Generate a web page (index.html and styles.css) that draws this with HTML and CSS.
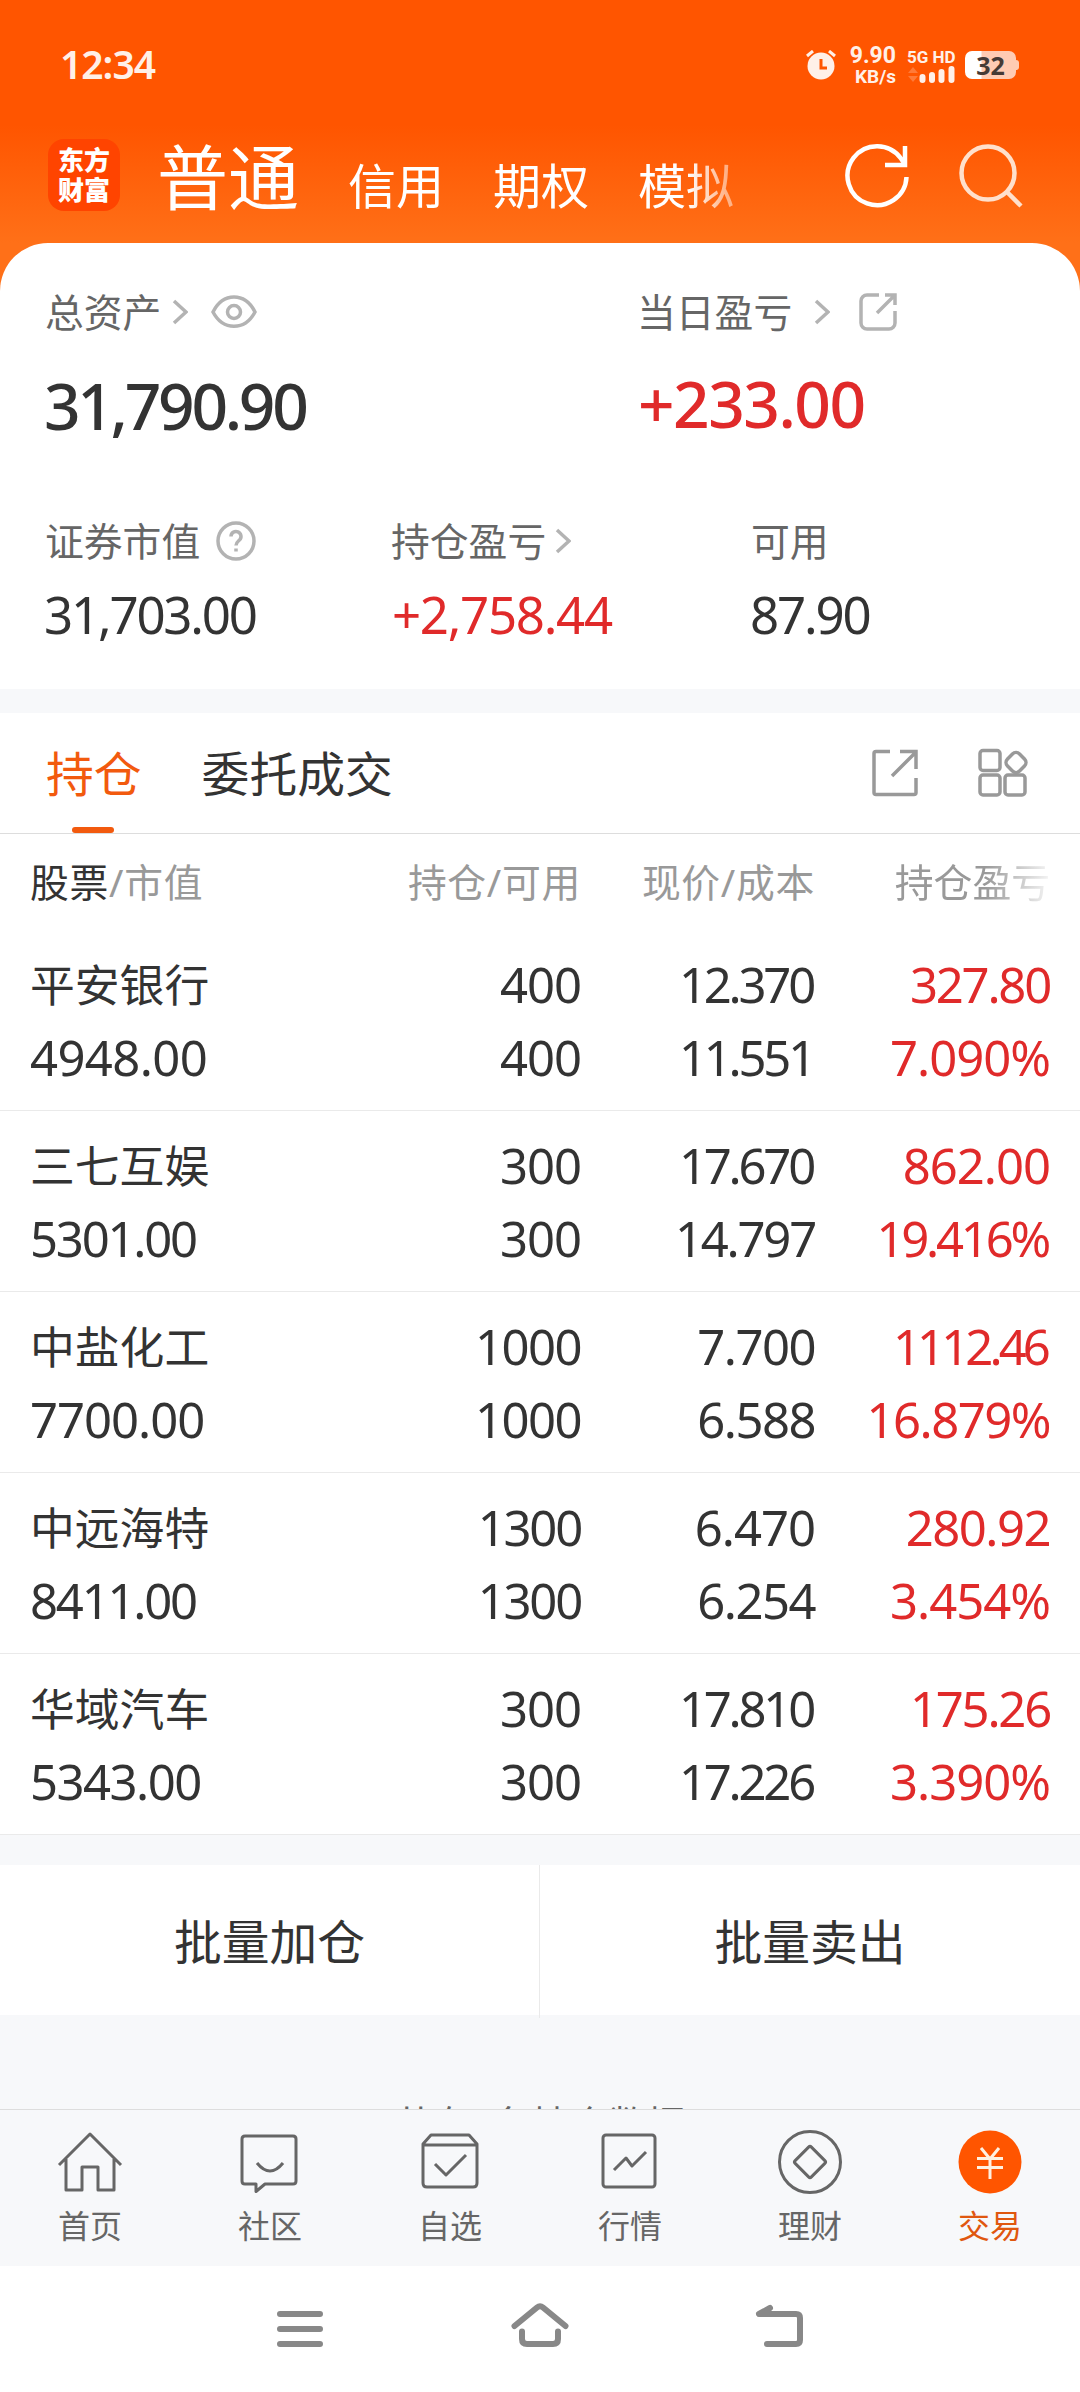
FILE: index.html
```html
<!DOCTYPE html>
<html lang="zh-CN">
<head>
    <meta charset="UTF-8">
    <title>交易</title>
    <link rel="stylesheet" href="styles.css">
</head>
<body>
    <div class="header">
        <!-- 状态栏 -->
        <div class="status">
            <span class="time">12:34</span>
            <svg class="alarm" width="30" height="30" viewBox="0 0 30 30">
                <circle cx="15" cy="16" r="13.5" fill="#fff0e8"/>
                <path d="M1 6l6-5M29 6l-6-5" stroke="#fff0e8" stroke-width="3"/>
                <path d="M15 9v9h6" fill="none" stroke="#ff5500" stroke-width="3"/>
            </svg>
            <div class="speed"><b>9.90</b><b>KB/s</b></div>
            <div class="signal">
                <b>5G HD</b>
                <svg width="48" height="17" viewBox="0 0 48 17">
                    <path d="M1 7l5-6 5 6zM1 10l5 6 5-6z" fill="#ff7a38"/>
                    <path d="M15.500 11v3M25 9v5M34.500 6v8M44.500 3v11" stroke="#fff0e8" stroke-width="6" stroke-linecap="round"/>
                </svg>
            </div>
            <div class="battery"><span>32</span></div>
        </div>
        <!-- 顶部导航 -->
        <div class="nav">
            <div class="logo"><p>东方</p><p>财富</p></div>
            <div class="nav-list">
                <span class="on">普通</span>
                <span>信用</span>
                <span>期权</span>
                <span>模拟</span>
            </div>
            <svg class="refresh" width="66" height="66" viewBox="0 0 66 66" fill="none" stroke="#fff" stroke-width="4.500">
                <path d="M62.500 34a29.500 29.500 0 1 1-5.500-18.500L60 20"/>
                <path d="M61 3v19H41"/>
            </svg>
            <svg class="search" width="66" height="66" viewBox="0 0 66 66" fill="none" stroke="#ffe0cc" stroke-width="4.500">
                <circle cx="30" cy="30" r="26.500"/>
                <path d="M48 48l15 15"/>
            </svg>
        </div>
    </div>

    <!-- 资产 -->
    <div class="asset">
        <div class="total">
            <div class="item">
                <p class="label">总资产
                    <svg class="arrow" width="16" height="26" viewBox="0 0 16 26"><path d="M2 2l12 11L2 24"/></svg>
                    <svg class="eye" width="46" height="34" viewBox="0 0 46 34">
                        <path d="M2 17C12-3 34-3 44 17 34 36 12 36 2 17z"/>
                        <circle cx="23" cy="17" r="6.500"/>
                    </svg>
                </p>
                <p class="money">31,790.90</p>
            </div>
            <div class="item">
                <p class="label">当日盈亏
                    <svg class="arrow far" width="16" height="26" viewBox="0 0 16 26"><path d="M2 2l12 11L2 24"/></svg>
                    <svg class="share" width="38" height="38" viewBox="0 0 38 38">
                        <path d="M20 2H8a6 6 0 0 0-6 6v22a6 6 0 0 0 6 6h22a6 6 0 0 0 6-6V18"/>
                        <path d="M26 2h10v10M35 3L18 20"/>
                    </svg>
                </p>
                <p class="money red up">+233.00</p>
            </div>
        </div>
        <div class="detail">
            <div class="item">
                <p class="label">证券市值
                    <svg class="help" width="40" height="40" viewBox="0 0 40 40">
                        <circle cx="20" cy="20" r="18"/>
                        <path d="M15 15.500a5 5 0 1 1 8.500 3.500c-2 1.800-3.500 2.600-3.500 5.500M20 27.500v3"/>
                    </svg>
                </p>
                <p class="num">31,703.00</p>
            </div>
            <div class="item">
                <p class="label">持仓盈亏
                    <svg class="arrow near" width="16" height="26" viewBox="0 0 16 26"><path d="M2 2l12 11L2 24"/></svg>
                </p>
                <p class="num red up">+2,758.44</p>
            </div>
            <div class="item">
                <p class="label">可用</p>
                <p class="num">87.90</p>
            </div>
        </div>
    </div>

    <!-- 持仓 -->
    <div class="hold">
        <div class="tabs">
            <span class="tab on">持仓</span>
            <span class="tab">委托成交</span>
            <svg class="share" width="46" height="48" viewBox="0 0 46 48">
                <path d="M18 2.500H4q-2 0-2 2v39q0 2 2 2h38q2 0 2-2V29"/>
                <path d="M28 2.500h16V20M43 4L20 27"/>
            </svg>
            <svg class="grid" width="50" height="50" viewBox="0 0 50 50">
                <rect x="2" y="2.500" width="20" height="20" rx="3"/>
                <rect x="2" y="27" width="20" height="20" rx="3"/>
                <rect x="27" y="27" width="20" height="20" rx="3"/>
                <rect x="29.500" y="6" width="17" height="17" rx="5" transform="rotate(45 38 14.500)"/>
            </svg>
        </div>
        <div class="row head">
            <span><em>股票</em>/市值</span>
            <span>持仓/可用</span>
            <span>现价/成本</span>
            <span class="fade">持仓盈亏</span>
        </div>
        <div class="row">
            <div><p class="name">平安银行</p><p class="wide">4948.00</p></div>
            <div><p>400</p><p>400</p></div>
            <div><p class="t2">12.370</p><p class="t2">11.551</p></div>
            <div class="red"><p class="t1">327.80</p><p>7.090%</p></div>
        </div>
        <div class="row">
            <div><p class="name">三七互娱</p><p class="t1">5301.00</p></div>
            <div><p>300</p><p>300</p></div>
            <div><p class="t2">17.670</p><p class="t1">14.797</p></div>
            <div class="red"><p>862.00</p><p class="t2">19.416%</p></div>
        </div>
        <div class="row">
            <div><p class="name">中盐化工</p><p>7700.00</p></div>
            <div><p class="t0">1000</p><p class="t0">1000</p></div>
            <div><p class="t0">7.700</p><p class="t0">6.588</p></div>
            <div class="red"><p class="t3">1112.46</p><p class="t0">16.879%</p></div>
        </div>
        <div class="row">
            <div><p class="name">中远海特</p><p class="t1">8411.00</p></div>
            <div><p class="t1">1300</p><p class="t1">1300</p></div>
            <div><p>6.470</p><p class="t0">6.254</p></div>
            <div class="red"><p class="t0">280.92</p><p>3.454%</p></div>
        </div>
        <div class="row">
            <div><p class="name">华域汽车</p><p class="t0">5343.00</p></div>
            <div><p>300</p><p>300</p></div>
            <div><p class="t2">17.810</p><p class="t2">17.226</p></div>
            <div class="red"><p class="t1">175.26</p><p>3.390%</p></div>
        </div>
    </div>

    <div class="batch">
        <span>批量加仓</span>
        <span>批量卖出</span>
    </div>
    <div class="count">共有5条持仓数据</div>

    <!-- 底部标签栏 -->
    <div class="tabbar">
        <div>
            <svg width="66" height="66" viewBox="0 0 66 66">
                <path d="M2 35L33 4l31 31M9 29v31h16V37h16v23h16V29"/>
            </svg>
            <p>首页</p>
        </div>
        <div>
            <svg width="66" height="66" viewBox="0 0 66 66">
                <path d="M8 6h48q3 0 3 3v42q0 3-3 3H28l-9 7.500V54H8q-3 0-3-3V9q0-3 3-3zM20 33q13 16 26 0"/>
            </svg>
            <p>社区</p>
        </div>
        <div>
            <svg width="66" height="66" viewBox="0 0 66 66">
                <path d="M6 14l8-9h38l8 9v39q0 4-4 4H10q-4 0-4-4zM6 15h54M18 34l11 11 20-20"/>
            </svg>
            <p>自选</p>
        </div>
        <div>
            <svg width="66" height="66" viewBox="0 0 66 66">
                <rect x="6" y="5" width="52" height="52" rx="3"/>
                <path d="M17 40l12-12 6 8 14-14"/>
            </svg>
            <p>行情</p>
        </div>
        <div>
            <svg width="66" height="66" viewBox="0 0 66 66">
                <circle cx="33" cy="32" r="30.500"/>
                <rect x="21.500" y="20.500" width="23" height="23" rx="2" transform="rotate(45 33 32)"/>
            </svg>
            <p>理财</p>
        </div>
        <div class="on">
            <svg width="66" height="66" viewBox="0 0 66 66">
                <circle cx="33" cy="32" r="31.500"/>
                <path d="M24 18l9 11 9-11M20 28.500h26M20 37.500h26M33 29v20"/>
            </svg>
            <p>交易</p>
        </div>
    </div>

    <!-- 系统按键 -->
    <div class="keys">
        <svg width="60" height="60" viewBox="0 0 60 60"><path d="M10 15h40M10 30h40M10 45h40"/></svg>
        <svg width="60" height="60" viewBox="0 0 60 60"><path d="M4.500 27L27 8.500q3-2.500 6 0L55.500 27M12 32.500v7.500q0 5 5 5h26q5 0 5-5v-7.500"/></svg>
        <svg width="60" height="60" viewBox="0 0 60 60"><path d="M20 9L9 15h37q4 0 4 4V41q0 4-4 4H17"/></svg>
    </div>
</body>
</html>
```
FILE: styles.css
```css
* {
    margin: 0;
    padding: 0;
    box-sizing: border-box;
}
body {
    width: 1080px;
    height: 2392px;
    overflow: hidden;
    display: flex;
    flex-direction: column;
    background: #f7f8fa;
    color: #333;
    font-family: "Noto Sans", "Noto Sans CJK SC", sans-serif;
}
svg {
    display: block;
    flex: none;
    fill: none;
}
em {
    font-style: normal;
}
.red {
    color: #e02a2a;
}

/* 头部 */
.header {
    height: 291px;
    padding: 44px 56px 0 48px;
    background: linear-gradient(#ff5500 125px, #ff7018 243px);
    color: #fff;
}
.status {
    height: 42px;
    display: flex;
    align-items: center;
    color: #fff0e8;
}
.time {
    margin: -3px auto 0 12px;
    font-size: 39px;
    font-weight: 600;
    letter-spacing: -1px;
}
.speed {
    width: 48px;
    margin-left: 12px;
    text-align: right;
    font-family: Roboto, sans-serif;
    font-size: 23px;
    line-height: 22px;
}
.speed b {
    display: block;
}
.speed b + b {
    font-size: 19px;
    line-height: 19px;
}
.signal {
    width: 50px;
    margin: 0 8px 0 11px;
    font-family: Roboto, sans-serif;
    font-size: 17px;
    line-height: 18px;
}
.signal b {
    display: block;
    white-space: nowrap;
}
.battery {
    position: relative;
    width: 51px;
    height: 28px;
    margin-right: 8px;
    border-radius: 7px;
    background: linear-gradient(90deg, #fff 16px, #ffcbb3 17px);
    color: #463a35;
    font-size: 25px;
    font-weight: bold;
    line-height: 28px;
    text-align: center;
}
.battery::after {
    content: "";
    position: absolute;
    right: -3px;
    top: 9px;
    width: 4px;
    height: 10px;
    border-radius: 0 3px 3px 0;
    background: #ffcbb3;
}
.nav {
    height: 140px;
    display: flex;
    align-items: center;
}
.logo {
    width: 72px;
    height: 72px;
    margin-top: 53px;
    align-self: flex-start;
    padding-top: 5px;
    border-radius: 16px;
    background: #ff4400;
    font-family: "Noto Sans CJK SC", sans-serif;
    font-size: 26px;
    font-weight: 900;
    line-height: 30px;
    text-align: center;
}
.nav-list {
    height: 100px;
    margin: 39px auto 0 37px;
    display: flex;
    align-items: baseline;
    gap: 49px;
    font-size: 48px;
    line-height: 102px;
    -webkit-mask: linear-gradient(90deg, #000 530px, rgba(0,0,0,.5) 570px);
    mask: linear-gradient(90deg, #000 530px, rgba(0,0,0,.5) 570px);
}
.nav-list .on {
    font-size: 71px;
}
.refresh {
    margin: 39px 48px 0 0;
}
.search {
    margin-top: 39px;
}

/* 资产 */
.asset {
    height: 446px;
    margin-top: -48px;
    padding: 41px 45px 0;
    border-radius: 48px 48px 0 0;
    background: #fff;
}
.label {
    display: flex;
    align-items: center;
    height: 56px;
    font-size: 38.800px;
    line-height: 56px;
    color: #666;
}
.label svg {
    stroke: #b3b3b3;
    stroke-width: 3.500;
}
.arrow {
    margin-left: 11px;
}
.arrow.far {
    margin-left: 22px;
}
.arrow.near {
    margin-left: 9px;
}
.eye {
    margin-left: 23px;
}
.asset .total .share {
    margin-left: 29px;
}
.help {
    margin-left: 16px;
}
.total {
    display: grid;
    grid-template-columns: 592px 1fr;
}
.money {
    height: 90px;
    margin: 21px 0 0 -1px;
    font-size: 64px;
    font-weight: 500;
    line-height: 90px;
    letter-spacing: -3.300px;
}
.money.up {
    letter-spacing: -1.500px;
    margin: 19px 0 0 1px;
}
.detail {
    display: grid;
    grid-template-columns: 346px 360px 1fr;
    margin-top: 62px;
}
.num {
    height: 70px;
    margin: 10px 0 0 -1px;
    font-size: 51px;
    line-height: 70px;
    letter-spacing: -2.200px;
}
.num.up {
    margin-left: 1px;
    letter-spacing: -1.300px;
}

/* 持仓列表 */
.hold {
    margin-top: 24px;
    background: #fff;
}
.tabs {
    height: 121px;
    padding: 0 52px 0 46px;
    border-bottom: 1px solid #ddd;
    display: flex;
    align-items: center;
    font-size: 47.800px;
}
.tabs .tab {
    position: relative;
    height: 120px;
    margin-right: 60px;
    line-height: 122px;
}
.tabs .on {
    color: #f25a0e;
}
.tabs .on::after {
    content: "";
    position: absolute;
    left: 26px;
    bottom: 0;
    width: 42px;
    height: 6px;
    border-radius: 3px;
    background: #f25a0e;
}
.tabs svg {
    stroke: #999;
    stroke-width: 3.500;
}
.tabs .share {
    margin-left: auto;
}
.tabs .grid {
    margin-left: 60px;
}
.row {
    height: 181px;
    padding: 18px 30px 0;
    border-bottom: 1px solid #eaeaea;
    display: grid;
    grid-template-columns: 300px 251px 234px 235px;
    text-align: right;
    font-size: 49px;
    line-height: 73px;
    letter-spacing: -1px;
}
.row > :first-child {
    text-align: left;
}
.row .name {
    font-size: 44.800px;
    letter-spacing: 0;
}
/* 带1的数字收紧一点 */
.row .t0 {
    letter-spacing: -1.500px;
}
.row .t1 {
    letter-spacing: -2.200px;
}
.row .t2 {
    letter-spacing: -3.200px;
    padding-right: 2px;
}
.row .t3 {
    letter-spacing: -3.900px;
    padding-right: 3px;
}
.row .wide {
    letter-spacing: -.600px;
}
.head {
    height: 96px;
    padding-top: 18px;
    border: none;
    font-size: 38.800px;
    line-height: 60px;
    letter-spacing: .700px;
    color: #999;
}
.head em {
    color: #333;
}
.head .fade {
    letter-spacing: 0;
    -webkit-mask: linear-gradient(90deg, #000 170px, rgba(0,0,0,.1) 235px);
    mask: linear-gradient(90deg, #000 170px, rgba(0,0,0,.1) 235px);
}

/* 批量操作 */
.batch {
    height: 150px;
    margin-top: 30px;
    display: grid;
    grid-template-columns: 539px 541px;
    background: #fff;
    font-size: 47.800px;
    line-height: 153px;
    text-align: center;
}
.batch span + span {
    border-left: 1px solid #eaeaea;
}
.count {
    height: 94px;
    padding-top: 79px;
    overflow: hidden;
    text-align: center;
    font-family: "Noto Sans CJK SC", sans-serif;
    font-size: 38.500px;
    line-height: 56px;
    color: #666;
}

/* 底部 */
.tabbar {
    height: 157px;
    padding-top: 20px;
    border-top: 1px solid #ddd;
    display: grid;
    grid-template-columns: repeat(6, 1fr);
    background: #f7f8fa;
    color: #666;
    font-size: 32px;
    line-height: 46px;
    text-align: center;
}
.tabbar svg {
    margin: 0 auto 7px;
    stroke: #666;
    stroke-width: 3;
    stroke-linejoin: round;
}
.tabbar .on {
    color: #e0570f;
}
.tabbar .on circle {
    fill: #ff5500;
    stroke: none;
}
.tabbar .on path {
    stroke: #fff0e0;
}
.keys {
    flex: 1;
    padding: 33px 180px 0;
    display: grid;
    grid-template-columns: repeat(3, 1fr);
    justify-items: center;
    background: #fff;
}
.keys svg {
    stroke: #888;
    stroke-width: 6;
    stroke-linecap: round;
    stroke-linejoin: round;
}
```
